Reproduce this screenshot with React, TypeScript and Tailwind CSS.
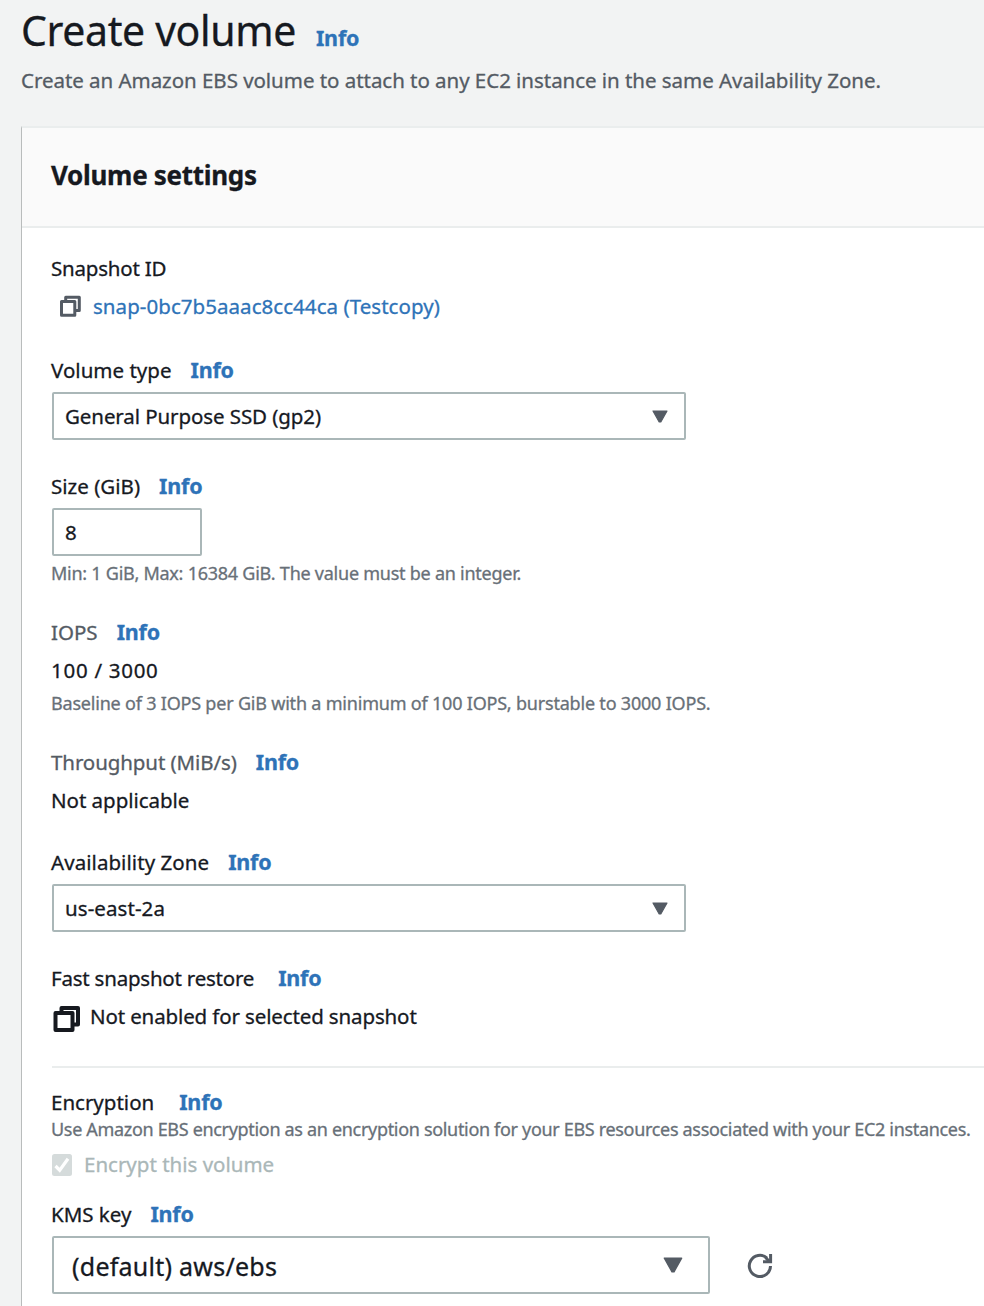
import type { ReactNode } from 'react';

function Line({ children, className = '' }: { children: ReactNode; className?: string }) {
  return (
    <div className={`flex h-[30px] items-baseline whitespace-nowrap text-[20.5px] leading-[30px] ${className}`}>
      {children}
    </div>
  );
}

function Hint({ children, className = '' }: { children: ReactNode; className?: string }) {
  return (
    <p className={`h-[30px] whitespace-nowrap text-[18px] leading-[30px] text-[#687078] ${className}`}>{children}</p>
  );
}

function Info({ className = 'ml-[19px]' }: { className?: string }) {
  return (
    <a href="#" className={`text-[21.5px] font-bold leading-[30px] tracking-[-0.2px] text-[#2e73b8] ${className}`}>
      Info
    </a>
  );
}

function Caret({ className }: { className: string }) {
  return (
    <svg viewBox="0 0 16 13" className={className} fill="#545b64" stroke="#545b64" strokeWidth="1.2" strokeLinejoin="round">
      <path d="M1 1h14L8.800 12H7.200z" />
    </svg>
  );
}

function Select({ children }: { children: ReactNode }) {
  return (
    <button className="ml-px mt-[7px] flex h-[48px] w-[634px] items-center justify-between rounded-[2px] border-2 border-[#aab7b8] bg-white pl-[11px] pr-[16px] text-[20.5px] leading-[30px]">
      {children}
      <Caret className="h-[13px] w-[16px]" />
    </button>
  );
}

export default function App() {
  return (
    <main className="h-[1306px] w-[984px] overflow-hidden bg-[#f2f3f3] font-['Noto_Sans','Open_Sans',sans-serif] text-[#16191f] [-webkit-text-stroke:0.3px]">
      <header className="h-[126px] pl-[21px]">
        <div className="flex h-[60px] items-baseline leading-[60px]">
          <h1 className="text-[41px] font-normal tracking-[-0.37px]">Create volume</h1>
          <Info className="ml-[20px]" />
        </div>
        <p className="mt-[5px] whitespace-nowrap text-[20.5px] leading-[30px] tracking-[-0.04px] text-[#545b64]">
          Create an Amazon EBS volume to attach to any EC2 instance in the same Availability Zone.
        </p>
      </header>

      <section className="ml-[21px] h-[1180px] border-l border-t-2 border-l-[#b9bcbc] border-t-[#eaeded] bg-white">
        <div className="flex h-[100px] border-b-2 border-[#eaeded] bg-[#fafafa] pl-[29px] pt-[27px]">
          <h2 className="text-[26px] font-bold leading-[40px] tracking-[-0.3px]">Volume settings</h2>
        </div>

        <div className="pl-[29px] pt-[25px]">
          <Line className="tracking-[-0.2px]">Snapshot ID</Line>
          <div className="mt-2 flex h-[30px] items-center pl-[8px]">
            <svg viewBox="0 0 22 22" className="h-[22px] w-[22px]" fill="none" stroke="#545b64" strokeWidth="3" strokeLinejoin="round">
              <path d="M6.700 5.500V2.300h13.600v13.200h-3.500" />
              <path d="M2.500 6.500h13.300v13.800H2.500z" />
            </svg>
            <a href="#" className="ml-[12px] whitespace-nowrap text-[20.5px] leading-[30px] tracking-[0.05px] text-[#2e73b8]">
              snap-0bc7b5aaac8cc44ca (Testcopy)
            </a>
          </div>

          <Line className="mt-[34px]">
            <span className="tracking-[0.02px]">Volume type</span>
            <Info />
          </Line>
          <Select>
            <span className="tracking-[-0.09px]">General Purpose SSD (gp2)</span>
          </Select>

          <Line className="mt-[31px]">
            <span className="tracking-[0.02px]">Size (GiB)</span>
            <Info />
          </Line>
          <div className="ml-px mt-[7px] flex h-[48px] w-[150px] items-center rounded-[2px] border-2 border-[#aab7b8] pl-[11px] text-[20.5px] leading-[30px]">
            8
          </div>
          <Hint className="mt-[2px] tracking-[-0.245px]">Min: 1 GiB, Max: 16384 GiB. The value must be an integer.</Hint>

          <Line className="mt-[29px]">
            <span className="text-[#545b64]">IOPS</span>
            <Info />
          </Line>
          <Line className="mt-2 tracking-[0.72px]">100 / 3000</Line>
          <Hint className="mt-[3px] tracking-[-0.2px]">
            Baseline of 3 IOPS per GiB with a minimum of 100 IOPS, burstable to 3000 IOPS.
          </Hint>

          <Line className="mt-[29px]">
            <span className="tracking-[-0.09px] text-[#545b64]">Throughput (MiB/s)</span>
            <Info />
          </Line>
          <Line className="mt-2 tracking-[-0.03px]">Not applicable</Line>

          <Line className="mt-[32px]">
            <span className="tracking-[0.06px]">Availability Zone</span>
            <Info />
          </Line>
          <Select>
            <span className="tracking-[0.08px]">us-east-2a</span>
          </Select>

          <Line className="mt-[31px]">
            <span className="tracking-[-0.22px]">Fast snapshot restore</span>
            <Info className="ml-[24px]" />
          </Line>
          <div className="mt-2 flex h-[30px] items-start">
            <svg viewBox="0 0 28 28" className="ml-[2px] mt-[4px] h-[28px] w-[28px]" fill="none" stroke="#16191f" strokeWidth="4" strokeLinejoin="round">
              <path d="M8.500 7V3H25v16.500h-4" />
              <path d="M2.500 8H19.500v17H2.500z" />
            </svg>
            <span className="ml-[9px] whitespace-nowrap text-[20.5px] leading-[30px] tracking-[-0.13px]">
              Not enabled for selected snapshot
            </span>
          </div>

          <hr className="ml-px mt-[35px] border-t-2 border-[#eaeded]" />

          <Line className="mt-[19px]">
            <span>Encryption</span>
            <Info className="ml-[25px]" />
          </Line>
          <Hint className="-mt-[3px] tracking-[-0.32px]">
            Use Amazon EBS encryption as an encryption solution for your EBS resources associated with your EC2 instances.
          </Hint>
          <div className="mt-[5px] flex h-[30px] items-center text-[#aab7b8]">
            <svg viewBox="0 0 20 22" className="ml-px mt-[2px] h-[22px] w-[20px]">
              <rect width="20" height="22" rx="2.500" fill="#d5dbdb" />
              <path d="M3.500 12l4.200 4.200L16 4.800" fill="none" stroke="#fff" strokeWidth="3.200" />
            </svg>
            <span className="ml-[12px] text-[20.5px] leading-[30px]">Encrypt this volume</span>
          </div>

          <Line className="mt-[20px]">
            <span>KMS key</span>
            <Info />
          </Line>
          <div className="ml-px mt-[7px] flex items-center">
            <button className="flex h-[58px] w-[658px] items-center justify-between rounded-[2px] border-2 border-[#aab7b8] pl-[18px] pr-[25px] text-[25px] leading-[36px] tracking-[0.25px]">
              <span className="pt-[2px]">(default) aws/ebs</span>
              <Caret className="h-[16px] w-[20px]" />
            </button>
            <svg viewBox="0 0 26 26" className="ml-[37px] mt-[2px] h-[26px] w-[26px]" fill="none" stroke="#545b64" strokeWidth="3">
              <path d="M23.500 13a10.600 10.600 0 1 1-3.500-7.900" />
              <path d="M23.600 1v7.700H16" />
              <path d="M18.500 4.500l4 4" />
            </svg>
          </div>
        </div>
      </section>
    </main>
  );
}
